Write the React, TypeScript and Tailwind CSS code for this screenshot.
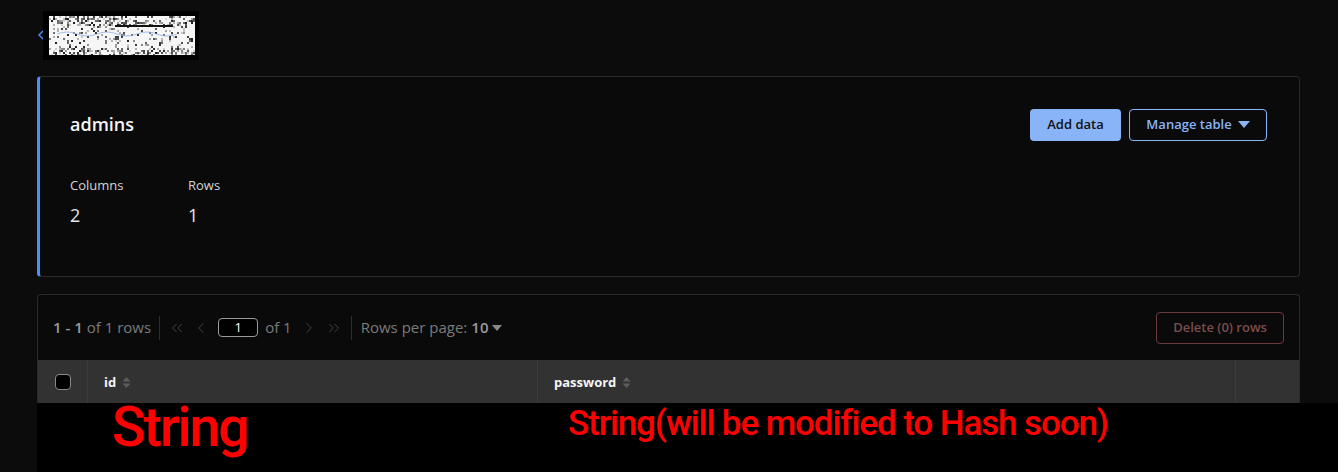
import React from 'react';
import { ChevronLeft, ChevronRight, ChevronsLeft, ChevronsRight } from 'lucide-react';

// stand-in for the blurred logo image: a noisy white patch drawn with rects
function LogoNoise() {
  const cells: React.ReactNode[] = [];
  let seed = 7;
  const rand = () => {
    seed = (seed * 9301 + 49297) % 233280;
    return seed / 233280;
  };
  for (let y = 0; y < 39; y += 2) {
    for (let x = 0; x < 146; x += 2) {
      const r = rand();
      const rowDark = y < 10 || y > 30 ? 0.4 : 0.14;
      if (r < rowDark) {
        const g = Math.floor(30 + rand() * 190);
        cells.push(<rect key={`${x}-${y}`} x={x} y={y} width={2} height={2} fill={`rgb(${g},${g},${g})`} />);
      }
    }
  }
  return (
    <svg width="146" height="39" viewBox="0 0 146 39" className="block">
      <rect width="146" height="39" fill="#f6f6f6" />
      {cells}
      <rect x="66" y="9" width="58" height="2" fill="#111" />
      <path d="M8 18 q10 -4 20 0 t20 0 t20 0 t20 0 t20 0 t20 0" stroke="#7ea6e8" strokeWidth="1" fill="none" opacity="0.7" />
    </svg>
  );
}

function SortIcon() {
  return (
    <svg width="9" height="13" viewBox="0 0 9 13" className="ml-1.5">
      <path d="M4.5 1 L8.5 5.5 H0.5 Z" fill="#5c5c5c" />
      <path d="M4.5 12 L8.5 7.5 H0.5 Z" fill="#5c5c5c" />
    </svg>
  );
}

export default function App() {
  return (
    <div className="min-h-screen bg-[#0c0c0c] text-neutral-200 font-['Open_Sans','Noto_Sans',sans-serif] overflow-hidden">
      <div className="pl-[37px]">
        {/* Header with back link and logo */}
        <div className="h-[76px] flex items-start pt-[11px]">
          <svg width="6" height="10" viewBox="0 0 6 10" className="mt-[19px] ml-[1px] shrink-0">
            <path d="M5 1 L1 5 L5 9" stroke="#4a8ff5" strokeWidth="1.4" fill="none" />
          </svg>
          <div className="bg-black py-[5px] pl-[6px] pr-[4px] -ml-px">
            <LogoNoise />
          </div>
        </div>

        <div className="pr-[38px]">
          {/* Table info card */}
          <div className="h-[201px] rounded border border-[#2a2a2a] border-l-[3px] border-l-[#4a8ff5] bg-[#0a0a0a] pl-[30px] pr-[32px] pt-[32px]">
            <div className="flex justify-between items-start">
              <h3 className="h-8 leading-[30px] text-lg font-semibold text-neutral-100">admins</h3>
              <div className="flex gap-2">
                <button className="h-8 w-[91px] rounded bg-[#8ab4f8] text-[13px] font-semibold text-[#111]">
                  Add data
                </button>
                <button className="h-8 w-[138px] rounded border border-[#8ab4f8] text-[13px] font-semibold text-[#8ab4f8] flex items-center justify-center gap-1.5">
                  Manage table
                  <svg width="12" height="8" viewBox="0 0 12 8">
                    <path d="M0 0 H12 L6 7 Z" fill="#8ab4f8" />
                  </svg>
                </button>
              </div>
            </div>
            <div className="flex mt-[34px]">
              <div className="w-[118px]">
                <div className="text-[13px] leading-5 text-neutral-300">Columns</div>
                <div className="text-lg leading-7 mt-[6px] text-neutral-200">2</div>
              </div>
              <div>
                <div className="text-[13px] leading-5 text-neutral-300">Rows</div>
                <div className="text-lg leading-7 mt-[6px] text-neutral-200">1</div>
              </div>
            </div>
          </div>

          {/* Data table card */}
          <div className="mt-[17px] rounded-t border border-b-0 border-[#2a2a2a] bg-[#0a0a0a]">
            <div className="h-[65px] flex items-center justify-between pl-[15px] pr-[15px]">
              <div className="flex items-center text-[15px] text-[#7a7a7a]">
                <span className="text-[#9a9a9a] font-semibold">1 - 1</span>
                <span className="ml-1">of 1 rows</span>
                <span className="ml-2 mr-2 h-6 w-px bg-[#2e2e2e]" />
                <ChevronsLeft size={18} strokeWidth={1.2} className="text-[#4a4a4a]" />
                <ChevronLeft size={18} strokeWidth={1.2} className="text-[#4a4a4a] ml-[6px]" />
                <span className="ml-[8px] w-10 h-[19px] rounded border border-[#9a9a9a] bg-black text-white text-[13px] leading-[17px] text-center">1</span>
                <span className="ml-[7px]">of 1</span>
                <ChevronRight size={18} strokeWidth={1.2} className="text-[#4a4a4a] ml-[8px]" />
                <ChevronsRight size={18} strokeWidth={1.2} className="text-[#4a4a4a] ml-[7px]" />
                <span className="ml-[8px] mr-[9px] h-6 w-px bg-[#2e2e2e]" />
                <span>Rows per page:</span>
                <span className="ml-1 text-[#9a9a9a] font-semibold">10</span>
                <svg width="10" height="6" viewBox="0 0 10 6" className="ml-1">
                  <path d="M0 0 H10 L5 6 Z" fill="#8a8a8a" />
                </svg>
              </div>
              <button className="h-8 w-[128px] rounded border border-[#6a3a3a] text-[13px] font-semibold text-[#7d4d4d]">
                Delete (0) rows
              </button>
            </div>
            <div className="h-[43px] flex bg-[#323232] text-[13px] font-bold text-neutral-100">
              <div className="w-[50px] flex items-center justify-center border-r border-[#3c3c3c]">
                <span className="w-4 h-4 rounded border border-[#8a8a8a] bg-black" />
              </div>
              <div className="w-[450px] flex items-center pl-4 pt-0.5 border-r border-[#3c3c3c]">
                id
                <SortIcon />
              </div>
              <div className="w-[698px] flex items-center pl-4 pt-0.5 border-r border-[#3c3c3c]">
                password
                <SortIcon />
              </div>
              <div className="flex-1" />
            </div>
          </div>
        </div>

        {/* Annotation strip */}
        <div className="h-[69px] bg-black flex items-start font-['Roboto','Noto_Sans',sans-serif] font-medium text-[#ff0000]">
          <div className="w-[531px] shrink-0 pl-[75px]">
            <span className="block -mt-[11px] text-[56px] leading-[70px] tracking-[-2.3px]">String</span>
          </div>
          <span className="block -mt-[1px] text-[35px] leading-[44px] tracking-[-1.1px] whitespace-nowrap">
            String(will be modified to Hash soon)
          </span>
        </div>
      </div>
    </div>
  );
}
